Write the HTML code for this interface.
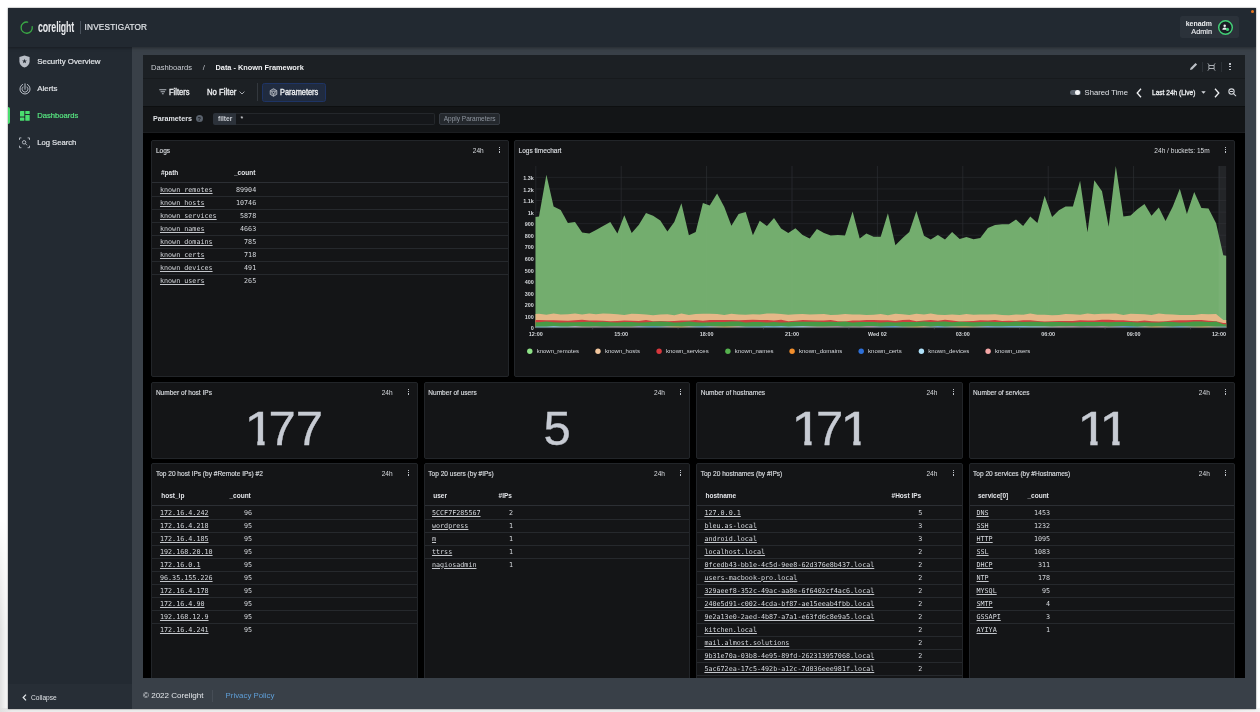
<!DOCTYPE html>
<html lang="en"><head><meta charset="utf-8"><title>Data - Known Framework | Corelight Investigator</title>
<style>
*{box-sizing:border-box;margin:0;padding:0}
html,body{width:1260px;height:712px;overflow:hidden;background:#fff}
body{font-family:"Liberation Sans",sans-serif;color:#d6d9de;position:relative}
.abs{position:absolute}
#outer{position:absolute;left:0;top:0;width:1260px;height:712px;background:#fff}
#outer:before{content:"";position:absolute;left:0;top:520px;width:9px;height:192px;background:linear-gradient(to right,rgba(0,0,0,.12),rgba(0,0,0,0));-webkit-mask-image:linear-gradient(to bottom,transparent,#000 110px);mask-image:linear-gradient(to bottom,transparent,#000 110px)}
#outer:after{content:"";position:absolute;left:0;top:708px;width:1260px;height:4px;background:linear-gradient(to right,#e0e0e0,#ececec 12px,#ececec 1225px,#f4f4f4)}
#frame{will-change:transform;position:absolute;left:8px;top:8px;width:1248px;height:701.3px;background:#394048;overflow:hidden;box-shadow:0 0 1.5px rgba(0,0,0,.6)}
#frame>*{position:absolute}
/* coordinates inside frame are page coords minus 8 */
#hdr{left:0;top:0;width:1248px;height:39px;background:#222931;box-shadow:0 1px 3px rgba(0,0,0,.35);z-index:3}
#side{left:0;top:39px;width:124px;height:663px;background:#232a32;z-index:2}
#side .foot{position:absolute;left:0;top:637px;width:124px;height:26px;background:#272e36}
.nav{position:absolute;left:29.3px;font-size:7.85px;color:#e3e6ea;-webkit-text-stroke:.18px;white-space:nowrap;line-height:10px;letter-spacing:0}
.nav.on{color:#58e882}
.ind{position:absolute;left:0;top:60px;width:2.2px;height:17px;background:#4ade6f;border-radius:0 2px 2px 0}
#main{left:135.2px;top:47.4px;width:1102.2px;height:622.7px;background:#000;overflow:hidden}
#main>*{position:absolute}
.row1{left:0;top:0;width:100%;height:22.5px;background:#1c2024}
.row2{left:0;top:22.5px;width:100%;height:28px;background:#1c2024;border-top:.7px solid #171a1d}
.row3{left:0;top:50.5px;width:100%;height:26.7px;background:#131517;border-top:.7px solid #0d0f10;border-bottom:.8px solid #1b1d20}
.t{position:absolute;white-space:nowrap;line-height:10px}
.panel{position:absolute;background:#141517;border:1px solid #222529;border-radius:2px;overflow:hidden}
.pt{position:absolute;left:3.5px;top:4.5px;-webkit-text-stroke:.15px;font-size:6.55px;line-height:10px;color:#d9dce0;white-space:nowrap}
.pr{position:absolute;right:24.5px;top:4.5px;font-size:6.55px;line-height:10px;color:#d9dce0;white-space:nowrap}
.dots{position:absolute;right:8.1px;top:5.7px;width:1.2px}
.dots i{display:block;width:1.2px;height:1.35px;background:#bfc3c9;margin-bottom:.95px}
.th{position:absolute;top:26.9px;font-size:6.5px;font-weight:700;line-height:10px;color:#e4e6ea;white-space:nowrap}
.hl{position:absolute;left:0;right:0;top:40.9px;height:1px;background:#2c2f34}
.tr{position:absolute;left:0;right:0;height:13px;font-family:"DejaVu Sans Mono","Liberation Mono",monospace;font-size:6.73px;line-height:12.4px;color:#d4d7dc}
.tr{border-top:.8px solid transparent}
.tr.sep{border-top-color:#26292d}
.tr span{position:absolute;top:0;white-space:nowrap}
.tr u{text-decoration-thickness:.75px;text-underline-offset:.7px;text-decoration-color:#c3c6cb}
.big{position:absolute;left:0;right:0;top:19.5px;text-align:center;font-size:49px;line-height:50px;color:#c7cbd3;-webkit-text-stroke:.35px #c7cbd3;white-space:nowrap}
.one{display:inline-block;width:21.8px;text-align:left;text-indent:-.8px;transform-origin:16.2px 50%;transform:scaleX(1.12);clip-path:polygon(-3px 0,17.5px 0,17.5px 60px,10.9px 60px,10.9px 37.9px,-3px 37.9px)}
.chart .ax{font-family:"Liberation Sans",sans-serif;font-size:5.45px;font-weight:700;fill:#d3d6da}
.chart .lg{font-family:"Liberation Sans",sans-serif;font-size:6px;fill:#d6d9de}
#foot{left:124px;top:670px;width:1124px;height:32px;background:#394048}

</style></head>
<body>
<div id="outer"></div>
<div id="frame">
  <div id="hdr">
    <svg class="abs" style="left:11px;top:11.5px" width="16" height="16" viewBox="0 0 16 16"><path d="M8.6 2.1 A5.6 5.6 0 1 0 13.2 6.6" fill="none" stroke="#3aa845" stroke-width="1.35" stroke-linecap="round"/></svg>
    <div class="t" id="lg1" style="left:29.6px;top:11.2px;font-size:14.2px;line-height:16px;font-weight:700;color:#e9ebee;transform-origin:0 50%;transform:scaleX(.622);letter-spacing:-.2px">corelight</div>
    <div class="abs" style="left:72px;top:13px;width:.8px;height:12.5px;background:#4a525c"></div>
    <div class="t" id="lg2" style="left:76.6px;top:15px;font-size:8.2px;line-height:10px;color:#dfe2e6;letter-spacing:.2px;-webkit-text-stroke:.2px">INVESTIGATOR</div>
    <div class="abs" style="left:1172px;top:7.700px;width:59.400px;height:22.800px;background:#2b323a;border-radius:2.500px"></div>
    <div class="t" style="right:44px;top:10.9px;font-size:6.95px;font-weight:700;color:#eef0f2;line-height:9px">kenadm</div>
    <div class="t" style="right:44px;top:18.6px;font-size:7.3px;color:#e8eaed;line-height:9px;-webkit-text-stroke:.15px">Admin</div>
    <svg class="abs" style="left:1209.2px;top:10.8px" width="17" height="17" viewBox="0 0 17 17"><circle cx="8.5" cy="8.5" r="6.8" fill="#191d24" stroke="#43d077" stroke-width="1.45"/><circle cx="7.7" cy="6.7" r="1.25" fill="#eceef0"/><path d="M5.4 10.700c0-1.600 1-2.300 2.300-2.300s2.300.700 2.300 2.300z" fill="#eceef0"/><circle cx="10.500" cy="10.400" r="1.600" fill="#43d077"/></svg>
    <div class="abs" style="left:1243px;top:1.6px;width:3px;height:3px;border-radius:50%;background:#e8761f"></div>
  </div>
  <div id="side">
    <!-- y inside side = page y - 47 -->
    <svg class="abs" style="left:11.2px;top:8.4px" width="11" height="13" viewBox="0 0 11 13"><path d="M5.5.4 10.6 2.1v4.3c0 3-2.2 5.2-5.1 6.2C2.6 11.600.4 9.400.4 6.400V2.100z" fill="#b9bec6"/><path d="M5.5 3.700 6.150 5.400 7.950 5.450 6.550 6.550 7.050 8.300 5.500 7.300 3.950 8.300 4.450 6.550 3.050 5.450 4.850 5.400z" fill="#232a32"/></svg>
    <div class="nav" style="top:9.6px">Security Overview</div>
    <svg class="abs" style="left:10.700px;top:35.700px" width="12" height="12" viewBox="0 0 12 12" fill="none" stroke="#b9bec6" stroke-linecap="round"><path d="M3.600 1.400A5.100 5.100 0 1 0 8.400 1.400" stroke-width="1"/><path d="M3.900 3.900A3 3 0 1 0 8.100 3.900" stroke-width=".9"/><path d="M6 .8V6.300" stroke-width="1"/></svg>
    <div class="nav" style="top:36.6px">Alerts</div>
    <div class="ind"></div>
    <svg class="abs" style="left:11.800px;top:64.200px" width="10" height="10" viewBox="0 0 10 10" fill="#4ade6f"><rect x="0" y="0" width="4.300" height="5.600" rx=".5"/><rect x="0" y="6.600" width="4.300" height="3.100" rx=".5"/><rect x="5.300" y="0" width="4.400" height="3.100" rx=".5"/><rect x="5.300" y="4.100" width="4.400" height="5.600" rx=".5"/></svg>
    <div class="nav on" style="top:63.800px;font-size:7.620px">Dashboards</div>
    <svg class="abs" style="left:11.300px;top:89.900px" width="11" height="12" viewBox="0 0 11 12" fill="none" stroke="#b9bec6" stroke-width=".9"><path d="M.5 2.900V.9h1.900M8.600.9h1.900v2M10.500 8.700v2H8.600M2.400 10.700H.5v-2"/><circle cx="5.100" cy="5.300" r="1.700"/><path d="M6.400 6.600 7.800 8" stroke-linecap="round"/></svg>
    <div class="nav" style="top:90.700px;font-size:7.620px">Log Search</div>
    <div class="foot"></div>
    <svg class="abs" style="left:13.500px;top:647.200px" width="5" height="7" viewBox="0 0 5 7" fill="none" stroke="#e3e6ea" stroke-width="1.25"><path d="M4 .6 1.200 3.500 4 6.400"/></svg>
    <div class="t" style="left:23.100px;top:645.700px;font-size:6.600px;color:#dde0e4">Collapse</div>
  </div>
  <div id="main">
    <!-- coords inside main = page minus (143.2, 55.3) -->
    <div class="row1"></div><div class="row2"></div><div class="row3"></div>
    <div class="t" style="left:7.800px;top:7.400px;font-size:7.600px;color:#c9cdd3">Dashboards</div>
    <div class="t" style="left:59.500px;top:7.400px;font-size:7.600px;color:#c9cdd3">/</div>
    <div class="t" style="left:72.300px;top:7.400px;font-size:7.370px;font-weight:700;color:#f1f2f4">Data - Known Framework</div>
    <!-- top-right icons -->
    <svg class="abs" style="left:1045.600px;top:6.900px" width="9" height="9" viewBox="0 0 9 9"><path d="M6.500.9 8.100 2.500 3.100 7.500 1 8 1.500 5.900z" fill="#bcc0c6"/></svg>
    <div class="abs" style="left:1059.100px;top:6.500px;width:.7px;height:10px;background:#2c3136"></div>
    <svg class="abs" style="left:1063.900px;top:7.400px" width="9" height="8" viewBox="0 0 9 8" fill="none" stroke="#b4b8be" stroke-width=".95"><path d="M.9.400Q1.900 1.500 1.900 2.500V5.500Q1.900 6.500.9 7.600M8.100.400Q7.100 1.500 7.100 2.500V5.500Q7.100 6.500 8.100 7.600M1.900 2.500H7.100M1.900 5.500H7.100"/></svg>
    <div class="abs" style="left:1077.600px;top:6.500px;width:.7px;height:10px;background:#2c3136"></div>
    <div class="dots" style="left:1086.300px;top:7.800px;right:auto"><i style="margin-bottom:1.400px"></i><i style="margin-bottom:1.400px"></i><i></i></div>
    <!-- filters row -->
    <svg class="abs" style="left:15.900px;top:33.300px" width="8" height="6" viewBox="0 0 8 6" stroke="#b4b9c0" stroke-width="1.050"><path d="M.3.700h7M1.600 2.700h4.400M2.900 4.700h1.800"/></svg>
    <div class="t" style="left:26px;top:32.500px;font-size:8.200px;color:#eceef0;-webkit-text-stroke:.32px;transform-origin:0 50%;transform:scaleX(.923)">Filters</div>
    <div class="t" style="left:63.400px;top:32.500px;font-size:8.200px;color:#f0f2f4;-webkit-text-stroke:.32px;transform-origin:0 50%;transform:scaleX(.946)">No Filter</div>
    <svg class="abs" style="left:96.200px;top:35.500px" width="6" height="4" viewBox="0 0 6 4" fill="none" stroke="#c9cdd3" stroke-width=".8"><path d="M.6.600 3 3 5.400.6"/></svg>
    <div class="abs" style="left:113.500px;top:27.500px;width:.6px;height:18px;background:#33383e"></div>
    <div class="abs" style="left:118.800px;top:27.300px;width:63.600px;height:19.400px;background:#202b3f;border:.9px solid #1e3465;border-radius:2.500px"></div>
    <svg class="abs" style="left:125.800px;top:32.300px" width="9" height="9" viewBox="0 0 9 9" fill="none" stroke="#c3c7cf" stroke-width=".75"><path d="M4.500.700 7.800 2.600V6.400L4.500 8.300 1.200 6.400V2.600z" fill="#8f95a0" fill-opacity=".55"/><path d="M4.500 4.500V8.300M4.500 4.500 1.200 2.600M4.500 4.500 7.800 2.600" stroke-width=".6"/><circle cx="4.500" cy="4.500" r="1.100" fill="#202b3f" stroke-width=".6"/></svg>
    <div class="t" style="left:137px;top:32.500px;font-size:8.200px;color:#f0f2f4;-webkit-text-stroke:.32px;transform-origin:0 50%;transform:scaleX(.905)">Parameters</div>
    <!-- shared time -->
    <div class="abs" style="left:926.600px;top:34.200px;width:10.800px;height:5.800px;border-radius:3px;background:#59616b"></div>
    <div class="abs" style="left:931.800px;top:34.400px;width:5.400px;height:5.400px;border-radius:50%;background:#f2f3f5"></div>
    <div class="t" style="left:941.400px;top:32.300px;font-size:7.650px;color:#dfe2e6">Shared Time</div>
    <svg class="abs" style="left:992.400px;top:32.600px" width="6" height="10" viewBox="0 0 6 10" fill="none" stroke="#eef0f2" stroke-width="1.300"><path d="M5 .8 1.200 5 5 9.200"/></svg>
    <div class="t" style="left:1008.500px;top:32.300px;font-size:7.400px;color:#eceef0;-webkit-text-stroke:.3px;transform-origin:0 50%;transform:scaleX(.888)">Last 24h (Live)</div>
    <svg class="abs" style="left:1057.700px;top:35.300px" width="5" height="3" viewBox="0 0 5 3"><path d="M.3.300h4.400L2.500 2.800z" fill="#d6d9de"/></svg>
    <svg class="abs" style="left:1071px;top:32.600px" width="6" height="10" viewBox="0 0 6 10" fill="none" stroke="#eef0f2" stroke-width="1.300"><path d="M1 .8 4.800 5 1 9.200"/></svg>
    <svg class="abs" style="left:1085.100px;top:32.800px" width="8.500" height="8.500" viewBox="0 0 8 8" fill="none" stroke="#d3d6db" stroke-width="1"><circle cx="3.300" cy="3.300" r="2.500"/><path d="M5.200 5.200 7.300 7.300M2.200 3.300h2.200" stroke-linecap="round"/></svg>
    <!-- params row -->
    <div class="t" style="left:9.800px;top:58.600px;font-size:7.150px;font-weight:700;color:#dfe2e6">Parameters</div>
    <div class="abs" style="left:52.500px;top:59.800px;width:7px;height:7px;border-radius:50%;background:#5a626d"></div>
    <div class="t" style="left:54.400px;top:58.400px;font-size:5.600px;font-weight:700;color:#14171a">?</div>
    <div class="abs" style="left:92.500px;top:57.200px;width:199.500px;height:12.200px;background:#15171a;border:.6px solid #24272b;border-left:0;border-radius:0 2px 2px 0"></div>
    <div class="abs" style="left:69.800px;top:57.300px;width:23px;height:12px;background:#2c323a;border-radius:2px 0 0 2px"></div>
    <div class="t" style="left:74.800px;top:58.400px;font-size:6.600px;font-weight:700;color:#c9cdd3">filter</div>
    <div class="t" style="left:97.300px;top:58.400px;font-size:7px;color:#e6e8eb">*</div>
    <div class="abs" style="left:295.800px;top:57.400px;width:61px;height:12px;background:#24282d;border:.6px solid #353a41;border-radius:2px"></div>
    <div class="t" style="left:300.500px;top:58.500px;font-size:6.540px;color:#8f96a0">Apply Parameters</div>
    <div id="dash" class="abs" style="left:-143.200px;top:-55.400px;width:1260px;height:712px">
<div class="panel" style="left:151.4px;top:140.0px;width:357.8px;height:237.0px;"><div class="pt">Logs</div><div class="pr">24h</div><div class="dots"><i></i><i></i><i></i></div><div class="th" style="left:8.6px">#path</div><div class="th r" style="right:252.9px">_count</div><div class="hl"></div><div class="tr" style="top:41.60px"><span class="c1" style="left:7.6px"><u>known_remotes</u></span><span class="c2" style="right:252.0px">89904</span></div><div class="tr sep" style="top:54.60px"><span class="c1" style="left:7.6px"><u>known_hosts</u></span><span class="c2" style="right:252.0px">10746</span></div><div class="tr sep" style="top:67.60px"><span class="c1" style="left:7.6px"><u>known_services</u></span><span class="c2" style="right:252.0px">5878</span></div><div class="tr sep" style="top:80.60px"><span class="c1" style="left:7.6px"><u>known_names</u></span><span class="c2" style="right:252.0px">4663</span></div><div class="tr sep" style="top:93.60px"><span class="c1" style="left:7.6px"><u>known_domains</u></span><span class="c2" style="right:252.0px">785</span></div><div class="tr sep" style="top:106.60px"><span class="c1" style="left:7.6px"><u>known_certs</u></span><span class="c2" style="right:252.0px">718</span></div><div class="tr sep" style="top:119.60px"><span class="c1" style="left:7.6px"><u>known_devices</u></span><span class="c2" style="right:252.0px">491</span></div><div class="tr sep" style="top:132.60px"><span class="c1" style="left:7.6px"><u>known_users</u></span><span class="c2" style="right:252.0px">265</span></div></div>
<div class="panel" style="left:514.0px;top:140.0px;width:721.2px;height:237.0px;"><div class="pt">Logs timechart</div><div class="pr">24h / buckets: 15m</div><div class="dots"><i></i><i></i><i></i></div><svg class="chart" width="722" height="238" viewBox="0 0 722 238" style="position:absolute;left:-1.0px;top:-1px"><rect x="704.6" y="26.0" width="7.6" height="161.8" fill="#1a1c1f"/>
<line x1="21.5" x2="712.2" y1="187.80" y2="187.80" stroke="#26282c" stroke-width="0.7"/>
<line x1="21.5" x2="712.2" y1="176.23" y2="176.23" stroke="#26282c" stroke-width="0.7"/>
<line x1="21.5" x2="712.2" y1="164.66" y2="164.66" stroke="#26282c" stroke-width="0.7"/>
<line x1="21.5" x2="712.2" y1="153.09" y2="153.09" stroke="#26282c" stroke-width="0.7"/>
<line x1="21.5" x2="712.2" y1="141.52" y2="141.52" stroke="#26282c" stroke-width="0.7"/>
<line x1="21.5" x2="712.2" y1="129.95" y2="129.95" stroke="#26282c" stroke-width="0.7"/>
<line x1="21.5" x2="712.2" y1="118.38" y2="118.38" stroke="#26282c" stroke-width="0.7"/>
<line x1="21.5" x2="712.2" y1="106.81" y2="106.81" stroke="#26282c" stroke-width="0.7"/>
<line x1="21.5" x2="712.2" y1="95.24" y2="95.24" stroke="#26282c" stroke-width="0.7"/>
<line x1="21.5" x2="712.2" y1="83.67" y2="83.67" stroke="#26282c" stroke-width="0.7"/>
<line x1="21.5" x2="712.2" y1="72.10" y2="72.10" stroke="#26282c" stroke-width="0.7"/>
<line x1="21.5" x2="712.2" y1="60.53" y2="60.53" stroke="#26282c" stroke-width="0.7"/>
<line x1="21.5" x2="712.2" y1="48.96" y2="48.96" stroke="#26282c" stroke-width="0.7"/>
<line x1="21.5" x2="712.2" y1="37.39" y2="37.39" stroke="#26282c" stroke-width="0.7"/>
<line x1="21.8" x2="21.8" y1="26.0" y2="187.8" stroke="#2a2c30" stroke-width="0.7"/>
<line x1="107.2" x2="107.2" y1="26.0" y2="187.8" stroke="#2a2c30" stroke-width="0.7"/>
<line x1="192.6" x2="192.6" y1="26.0" y2="187.8" stroke="#2a2c30" stroke-width="0.7"/>
<line x1="278.0" x2="278.0" y1="26.0" y2="187.8" stroke="#2a2c30" stroke-width="0.7"/>
<line x1="363.4" x2="363.4" y1="26.0" y2="187.8" stroke="#2a2c30" stroke-width="0.7"/>
<line x1="448.8" x2="448.8" y1="26.0" y2="187.8" stroke="#2a2c30" stroke-width="0.7"/>
<line x1="534.2" x2="534.2" y1="26.0" y2="187.8" stroke="#2a2c30" stroke-width="0.7"/>
<line x1="619.6" x2="619.6" y1="26.0" y2="187.8" stroke="#2a2c30" stroke-width="0.7"/>
<line x1="705.0" x2="705.0" y1="26.0" y2="187.8" stroke="#2a2c30" stroke-width="0.7"/>
<path d="M21.5,187.8 L21.5,77.1 L25.0,76.4 L32.4,34.7 L39.6,66.4 L46.7,70.0 L53.9,82.9 L61.0,81.9 L68.1,92.4 L75.3,93.6 L82.0,90.0 L89.1,86.1 L96.3,81.9 L103.4,93.6 L110.3,75.3 L117.7,92.9 L124.9,84.7 L132.0,72.9 L139.1,75.7 L146.3,80.4 L153.4,91.4 L160.3,82.1 L167.4,63.3 L174.9,95.3 L181.7,92.1 L188.9,62.9 L195.7,65.4 L203.1,53.6 L210.3,67.1 L217.4,85.7 L224.6,74.0 L231.7,71.9 L238.9,95.3 L245.7,80.7 L252.9,86.1 L260.0,77.9 L267.1,88.6 L274.3,92.9 L281.4,88.3 L288.6,95.0 L295.7,98.6 L302.9,89.0 L310.0,92.9 L316.7,95.4 L323.9,95.0 L331.0,95.4 L338.6,71.4 L345.7,98.6 L352.4,93.6 L359.6,96.7 L366.7,96.7 L373.9,73.3 L381.4,105.3 L388.6,97.9 L395.3,92.1 L402.4,71.0 L410.0,95.7 L416.7,99.6 L423.9,95.0 L431.0,99.6 L438.1,92.1 L445.7,99.0 L452.4,96.9 L459.6,99.3 L466.3,98.1 L473.9,87.9 L481.0,85.0 L488.1,84.3 L494.9,84.3 L502.0,79.6 L509.1,86.0 L516.3,76.4 L523.4,83.1 L530.6,55.7 L538.1,77.1 L544.9,70.3 L551.6,66.4 L558.9,66.4 L566.1,40.8 L573.5,92.2 L580.3,40.3 L588.0,51.3 L594.7,86.7 L601.8,26.0 L609.4,76.6 L616.6,75.4 L623.4,69.3 L630.5,63.9 L637.5,75.7 L644.8,67.6 L651.5,81.1 L658.8,66.4 L665.8,48.8 L672.9,74.0 L680.2,52.1 L687.4,68.1 L694.5,68.6 L702.1,83.3 L709.3,115.3 L712.2,115.8 L712.2,187.8 Z" fill="#73ad6e" />
<rect x="704.6" y="26.0" width="7.6" height="161.8" fill="#ffffff" opacity="0.045"/>
<path d="M21.5,187.8 L21.5,174.1 L25.0,173.8 L32.4,174.7 L39.6,173.6 L46.7,174.5 L53.9,174.2 L61.0,173.6 L68.1,174.4 L75.3,173.6 L82.0,174.3 L89.1,173.6 L96.3,173.7 L103.4,174.3 L110.3,175.0 L117.7,173.7 L124.9,173.9 L132.0,174.6 L139.1,175.2 L146.3,174.5 L153.4,174.2 L160.3,175.3 L167.4,173.6 L174.9,175.0 L181.7,174.0 L188.9,173.8 L195.7,173.7 L203.1,174.1 L210.3,175.0 L217.4,173.8 L224.6,174.5 L231.7,174.7 L238.9,174.2 L245.7,174.5 L252.9,173.6 L260.0,173.6 L267.1,173.9 L274.3,174.7 L281.4,174.3 L288.6,174.1 L295.7,174.6 L302.9,174.3 L310.0,174.0 L316.7,174.9 L323.9,174.8 L331.0,173.9 L338.6,174.5 L345.7,174.4 L352.4,175.1 L359.6,174.8 L366.7,174.0 L373.9,175.3 L381.4,173.7 L388.6,174.3 L395.3,174.9 L402.4,173.8 L410.0,174.4 L416.7,173.6 L423.9,174.7 L431.0,174.9 L438.1,174.5 L445.7,175.1 L452.4,174.1 L459.6,174.8 L466.3,174.6 L473.9,174.5 L481.0,174.3 L488.1,175.0 L494.9,175.2 L502.0,174.4 L509.1,174.7 L516.3,173.6 L523.4,174.8 L530.6,174.7 L538.1,175.3 L544.9,175.0 L551.6,174.0 L558.9,174.2 L566.1,174.7 L573.5,173.5 L580.3,174.3 L588.0,173.8 L594.7,173.7 L601.8,173.6 L609.4,174.9 L616.6,173.7 L623.4,173.9 L630.5,174.2 L637.5,175.1 L644.8,173.6 L651.5,174.3 L658.8,174.5 L665.8,175.1 L672.9,175.0 L680.2,175.1 L687.4,174.0 L694.5,174.2 L702.1,174.1 L709.3,180.0 L712.2,180.0 L712.2,187.8 Z" fill="#e5b888" />
<path d="M21.5,187.8 L21.5,180.0 L25.0,180.1 L32.4,180.2 L39.6,180.2 L46.7,180.6 L53.9,180.7 L61.0,180.2 L68.1,179.8 L75.3,180.5 L82.0,180.4 L89.1,180.7 L96.3,181.3 L103.4,180.9 L110.3,180.6 L117.7,180.8 L124.9,180.9 L132.0,179.9 L139.1,181.2 L146.3,181.0 L153.4,181.2 L160.3,181.1 L167.4,180.4 L174.9,180.4 L181.7,180.0 L188.9,180.8 L195.7,179.9 L203.1,179.9 L210.3,180.1 L217.4,180.1 L224.6,180.3 L231.7,179.9 L238.9,179.8 L245.7,180.0 L252.9,180.0 L260.0,180.4 L267.1,179.8 L274.3,181.2 L281.4,180.8 L288.6,180.0 L295.7,180.2 L302.9,180.4 L310.0,180.4 L316.7,180.0 L323.9,181.2 L331.0,181.4 L338.6,180.5 L345.7,180.6 L352.4,179.9 L359.6,180.0 L366.7,180.3 L373.9,180.2 L381.4,181.1 L388.6,180.1 L395.3,179.8 L402.4,181.3 L410.0,180.6 L416.7,180.0 L423.9,180.7 L431.0,179.8 L438.1,180.6 L445.7,181.4 L452.4,181.2 L459.6,180.9 L466.3,180.2 L473.9,180.4 L481.0,180.1 L488.1,181.0 L494.9,180.7 L502.0,181.0 L509.1,180.3 L516.3,180.2 L523.4,181.1 L530.6,181.4 L538.1,181.2 L544.9,181.1 L551.6,181.1 L558.9,181.0 L566.1,180.2 L573.5,180.6 L580.3,180.4 L588.0,179.8 L594.7,179.8 L601.8,180.2 L609.4,180.2 L616.6,180.9 L623.4,181.3 L630.5,180.5 L637.5,181.3 L644.8,181.4 L651.5,181.3 L658.8,180.4 L665.8,180.2 L672.9,180.2 L680.2,180.1 L687.4,180.1 L694.5,180.8 L702.1,181.2 L709.3,183.0 L712.2,183.0 L712.2,187.8 Z" fill="#cd403e" />
<path d="M21.5,187.8 L21.5,182.2 L25.0,182.3 L32.4,181.6 L39.6,182.2 L46.7,182.4 L53.9,182.3 L61.0,182.3 L68.1,182.0 L75.3,181.7 L82.0,182.3 L89.1,181.8 L96.3,182.3 L103.4,182.5 L110.3,181.9 L117.7,181.9 L124.9,182.4 L132.0,182.2 L139.1,181.7 L146.3,181.6 L153.4,181.7 L160.3,182.4 L167.4,182.3 L174.9,181.6 L181.7,182.3 L188.9,182.5 L195.7,182.2 L203.1,181.9 L210.3,182.0 L217.4,181.6 L224.6,181.5 L231.7,182.5 L238.9,182.1 L245.7,182.0 L252.9,182.4 L260.0,181.9 L267.1,182.4 L274.3,182.3 L281.4,181.7 L288.6,181.8 L295.7,181.8 L302.9,181.7 L310.0,182.1 L316.7,181.8 L323.9,181.9 L331.0,181.6 L338.6,182.4 L345.7,181.9 L352.4,182.0 L359.6,182.1 L366.7,182.4 L373.9,181.9 L381.4,182.4 L388.6,182.0 L395.3,182.0 L402.4,182.0 L410.0,181.5 L416.7,181.9 L423.9,181.7 L431.0,181.5 L438.1,182.3 L445.7,181.7 L452.4,182.0 L459.6,182.2 L466.3,182.1 L473.9,181.8 L481.0,182.0 L488.1,182.1 L494.9,182.3 L502.0,181.6 L509.1,182.1 L516.3,181.7 L523.4,181.8 L530.6,182.3 L538.1,182.0 L544.9,182.1 L551.6,182.3 L558.9,182.4 L566.1,181.9 L573.5,182.1 L580.3,182.0 L588.0,182.0 L594.7,182.2 L601.8,182.0 L609.4,182.0 L616.6,182.0 L623.4,182.4 L630.5,182.2 L637.5,182.4 L644.8,182.4 L651.5,181.8 L658.8,182.1 L665.8,182.4 L672.9,182.3 L680.2,181.6 L687.4,181.6 L694.5,181.9 L702.1,181.6 L709.3,184.2 L712.2,184.2 L712.2,187.8 Z" fill="#479a46" />
<defs><linearGradient id="mix" x1="0" x2="1" y1="0" y2="0"><stop offset="0.000" stop-color="#6fa8c8"/><stop offset="0.034" stop-color="#8fb5cf"/><stop offset="0.069" stop-color="#b39aa8"/><stop offset="0.103" stop-color="#8d8590"/><stop offset="0.138" stop-color="#a58fa0"/><stop offset="0.172" stop-color="#5f95c9"/><stop offset="0.207" stop-color="#c9a06a"/><stop offset="0.241" stop-color="#6c9ccc"/><stop offset="0.276" stop-color="#d0a070"/><stop offset="0.310" stop-color="#7d9fc4"/><stop offset="0.345" stop-color="#6fa8c8"/><stop offset="0.379" stop-color="#8fb5cf"/><stop offset="0.414" stop-color="#b39aa8"/><stop offset="0.448" stop-color="#8d8590"/><stop offset="0.483" stop-color="#a58fa0"/><stop offset="0.517" stop-color="#5f95c9"/><stop offset="0.552" stop-color="#c9a06a"/><stop offset="0.586" stop-color="#6c9ccc"/><stop offset="0.621" stop-color="#d0a070"/><stop offset="0.655" stop-color="#7d9fc4"/><stop offset="0.690" stop-color="#6fa8c8"/><stop offset="0.724" stop-color="#8fb5cf"/><stop offset="0.759" stop-color="#b39aa8"/><stop offset="0.793" stop-color="#8d8590"/><stop offset="0.828" stop-color="#a58fa0"/><stop offset="0.862" stop-color="#5f95c9"/><stop offset="0.897" stop-color="#c9a06a"/><stop offset="0.931" stop-color="#6c9ccc"/><stop offset="0.966" stop-color="#d0a070"/><stop offset="1.000" stop-color="#7d9fc4"/></linearGradient></defs>
<path d="M21.5,187.8 L21.5,186.4 L25.0,186.4 L32.4,186.5 L39.6,186.1 L46.7,186.4 L53.9,186.4 L61.0,186.1 L68.1,186.5 L75.3,186.5 L82.0,186.2 L89.1,186.5 L96.3,186.2 L103.4,186.3 L110.3,186.5 L117.7,186.5 L124.9,186.1 L132.0,186.3 L139.1,186.3 L146.3,186.2 L153.4,186.1 L160.3,186.2 L167.4,186.4 L174.9,186.1 L181.7,186.3 L188.9,186.3 L195.7,186.1 L203.1,186.2 L210.3,186.4 L217.4,186.3 L224.6,186.1 L231.7,186.5 L238.9,186.4 L245.7,186.5 L252.9,186.1 L260.0,186.2 L267.1,186.1 L274.3,186.4 L281.4,186.2 L288.6,186.1 L295.7,186.3 L302.9,186.5 L310.0,186.5 L316.7,186.2 L323.9,186.1 L331.0,186.5 L338.6,186.3 L345.7,186.4 L352.4,186.1 L359.6,186.1 L366.7,186.4 L373.9,186.3 L381.4,186.1 L388.6,186.5 L395.3,186.4 L402.4,186.5 L410.0,186.1 L416.7,186.5 L423.9,186.1 L431.0,186.5 L438.1,186.3 L445.7,186.2 L452.4,186.3 L459.6,186.5 L466.3,186.2 L473.9,186.1 L481.0,186.3 L488.1,186.2 L494.9,186.1 L502.0,186.1 L509.1,186.1 L516.3,186.2 L523.4,186.2 L530.6,186.2 L538.1,186.4 L544.9,186.2 L551.6,186.3 L558.9,186.1 L566.1,186.2 L573.5,186.1 L580.3,186.2 L588.0,186.1 L594.7,186.4 L601.8,186.3 L609.4,186.1 L616.6,186.3 L623.4,186.5 L630.5,186.1 L637.5,186.5 L644.8,186.3 L651.5,186.3 L658.8,186.5 L665.8,186.2 L672.9,186.3 L680.2,186.4 L687.4,186.5 L694.5,186.2 L702.1,186.5 L709.3,186.6 L712.2,186.6 L712.2,187.8 Z" fill="url(#mix)" />
<line x1="107.2" x2="107.2" y1="26.0" y2="187.8" stroke="#ffffff" stroke-opacity="0.025" stroke-width="0.7"/>
<line x1="192.6" x2="192.6" y1="26.0" y2="187.8" stroke="#ffffff" stroke-opacity="0.025" stroke-width="0.7"/>
<line x1="278.0" x2="278.0" y1="26.0" y2="187.8" stroke="#ffffff" stroke-opacity="0.025" stroke-width="0.7"/>
<line x1="363.4" x2="363.4" y1="26.0" y2="187.8" stroke="#ffffff" stroke-opacity="0.025" stroke-width="0.7"/>
<line x1="448.8" x2="448.8" y1="26.0" y2="187.8" stroke="#ffffff" stroke-opacity="0.025" stroke-width="0.7"/>
<line x1="534.2" x2="534.2" y1="26.0" y2="187.8" stroke="#ffffff" stroke-opacity="0.025" stroke-width="0.7"/>
<line x1="619.6" x2="619.6" y1="26.0" y2="187.8" stroke="#ffffff" stroke-opacity="0.025" stroke-width="0.7"/>
<line x1="21.5" x2="712.2" y1="187.8" y2="187.8" stroke="#3a3d42" stroke-width="0.6"/>
<text x="19.8" y="190.40" text-anchor="end" class="ax">0</text>
<text x="19.8" y="178.83" text-anchor="end" class="ax">100</text>
<text x="19.8" y="167.26" text-anchor="end" class="ax">200</text>
<text x="19.8" y="155.69" text-anchor="end" class="ax">300</text>
<text x="19.8" y="144.12" text-anchor="end" class="ax">400</text>
<text x="19.8" y="132.55" text-anchor="end" class="ax">500</text>
<text x="19.8" y="120.98" text-anchor="end" class="ax">600</text>
<text x="19.8" y="109.41" text-anchor="end" class="ax">700</text>
<text x="19.8" y="97.84" text-anchor="end" class="ax">800</text>
<text x="19.8" y="86.27" text-anchor="end" class="ax">900</text>
<text x="19.8" y="74.70" text-anchor="end" class="ax">1k</text>
<text x="19.8" y="63.13" text-anchor="end" class="ax">1.1k</text>
<text x="19.8" y="51.56" text-anchor="end" class="ax">1.2k</text>
<text x="19.8" y="39.99" text-anchor="end" class="ax">1.3k</text>
<text x="21.8" y="196.2" text-anchor="middle" class="ax">12:00</text>
<text x="107.2" y="196.2" text-anchor="middle" class="ax">15:00</text>
<text x="192.6" y="196.2" text-anchor="middle" class="ax">18:00</text>
<text x="278.0" y="196.2" text-anchor="middle" class="ax">21:00</text>
<text x="363.4" y="196.2" text-anchor="middle" class="ax">Wed 02</text>
<text x="448.8" y="196.2" text-anchor="middle" class="ax">03:00</text>
<text x="534.2" y="196.2" text-anchor="middle" class="ax">06:00</text>
<text x="619.6" y="196.2" text-anchor="middle" class="ax">09:00</text>
<text x="705.0" y="196.2" text-anchor="middle" class="ax">12:00</text>
<line x1="78.7" x2="78.7" y1="187.8" y2="189.3" stroke="#4a4d52" stroke-width="0.6"/>
<line x1="164.1" x2="164.1" y1="187.8" y2="189.3" stroke="#4a4d52" stroke-width="0.6"/>
<line x1="249.5" x2="249.5" y1="187.8" y2="189.3" stroke="#4a4d52" stroke-width="0.6"/>
<line x1="334.9" x2="334.9" y1="187.8" y2="189.3" stroke="#4a4d52" stroke-width="0.6"/>
<line x1="420.3" x2="420.3" y1="187.8" y2="189.3" stroke="#4a4d52" stroke-width="0.6"/>
<line x1="505.7" x2="505.7" y1="187.8" y2="189.3" stroke="#4a4d52" stroke-width="0.6"/>
<line x1="591.1" x2="591.1" y1="187.8" y2="189.3" stroke="#4a4d52" stroke-width="0.6"/>
<line x1="676.5" x2="676.5" y1="187.8" y2="189.3" stroke="#4a4d52" stroke-width="0.6"/>
<circle cx="15.8" cy="211.3" r="2.7" fill="#8ee287"/>
<text x="22.7" y="213.4" class="lg">known_remotes</text>
<circle cx="84.0" cy="211.3" r="2.7" fill="#f1c59d"/>
<text x="90.9" y="213.4" class="lg">known_hosts</text>
<circle cx="145.1" cy="211.3" r="2.7" fill="#d7373d"/>
<text x="152.0" y="213.4" class="lg">known_services</text>
<circle cx="213.9" cy="211.3" r="2.7" fill="#55b14e"/>
<text x="220.8" y="213.4" class="lg">known_names</text>
<circle cx="278.1" cy="211.3" r="2.7" fill="#f28e2c"/>
<text x="285.0" y="213.4" class="lg">known_domains</text>
<circle cx="347.2" cy="211.3" r="2.7" fill="#2d6fd8"/>
<text x="354.1" y="213.4" class="lg">known_certs</text>
<circle cx="407.4" cy="211.3" r="2.7" fill="#b0e1f9"/>
<text x="414.3" y="213.4" class="lg">known_devices</text>
<circle cx="474.1" cy="211.3" r="2.7" fill="#f4a6a6"/>
<text x="481.0" y="213.4" class="lg">known_users</text></svg></div>
<div class="panel" style="left:151.4px;top:382.0px;width:266.7px;height:76.6px;"><div class="pt">Number of host IPs</div><div class="pr">24h</div><div class="dots"><i></i><i></i><i></i></div><div class="big"><span class="one">1</span>77</div></div>
<div class="panel" style="left:423.8px;top:382.0px;width:266.7px;height:76.6px;"><div class="pt">Number of users</div><div class="pr">24h</div><div class="dots"><i></i><i></i><i></i></div><div class="big">5</div></div>
<div class="panel" style="left:696.2px;top:382.0px;width:266.7px;height:76.6px;"><div class="pt">Number of hostnames</div><div class="pr">24h</div><div class="dots"><i></i><i></i><i></i></div><div class="big"><span class="one">1</span>7<span class="one">1</span></div></div>
<div class="panel" style="left:968.6px;top:382.0px;width:266.7px;height:76.6px;"><div class="pt">Number of services</div><div class="pr">24h</div><div class="dots"><i></i><i></i><i></i></div><div class="big"><span class="one">1</span><span class="one">1</span></div></div>
<div class="panel" style="left:151.4px;top:463.0px;width:266.7px;height:230.0px;"><div class="pt">Top 20 host IPs (by #Remote IPs) #2</div><div class="pr">24h</div><div class="dots"><i></i><i></i><i></i></div><div class="th" style="left:8.9px">host_ip</div><div class="th r" style="right:166.3px">_count</div><div class="hl"></div><div class="tr" style="top:41.60px"><span class="c1" style="left:7.6px"><u>172.16.4.242</u></span><span class="c2" style="right:165.0px">96</span></div><div class="tr sep" style="top:54.60px"><span class="c1" style="left:7.6px"><u>172.16.4.218</u></span><span class="c2" style="right:165.0px">95</span></div><div class="tr sep" style="top:67.60px"><span class="c1" style="left:7.6px"><u>172.16.4.185</u></span><span class="c2" style="right:165.0px">95</span></div><div class="tr sep" style="top:80.60px"><span class="c1" style="left:7.6px"><u>192.168.20.10</u></span><span class="c2" style="right:165.0px">95</span></div><div class="tr sep" style="top:93.60px"><span class="c1" style="left:7.6px"><u>172.16.0.1</u></span><span class="c2" style="right:165.0px">95</span></div><div class="tr sep" style="top:106.60px"><span class="c1" style="left:7.6px"><u>96.35.155.226</u></span><span class="c2" style="right:165.0px">95</span></div><div class="tr sep" style="top:119.60px"><span class="c1" style="left:7.6px"><u>172.16.4.178</u></span><span class="c2" style="right:165.0px">95</span></div><div class="tr sep" style="top:132.60px"><span class="c1" style="left:7.6px"><u>172.16.4.90</u></span><span class="c2" style="right:165.0px">95</span></div><div class="tr sep" style="top:145.60px"><span class="c1" style="left:7.6px"><u>192.168.12.9</u></span><span class="c2" style="right:165.0px">95</span></div><div class="tr sep" style="top:158.60px"><span class="c1" style="left:7.6px"><u>172.16.4.241</u></span><span class="c2" style="right:165.0px">95</span></div></div>
<div class="panel" style="left:423.8px;top:463.0px;width:266.7px;height:230.0px;"><div class="pt">Top 20 users (by #IPs)</div><div class="pr">24h</div><div class="dots"><i></i><i></i><i></i></div><div class="th" style="left:8.4px">user</div><div class="th r" style="right:177.5px">#IPs</div><div class="hl"></div><div class="tr" style="top:41.60px"><span class="c1" style="left:7.2px"><u>5CCF7F285567</u></span><span class="c2" style="right:176.5px">2</span></div><div class="tr sep" style="top:54.60px"><span class="c1" style="left:7.2px"><u>wordpress</u></span><span class="c2" style="right:176.5px">1</span></div><div class="tr sep" style="top:67.60px"><span class="c1" style="left:7.2px"><u>m</u></span><span class="c2" style="right:176.5px">1</span></div><div class="tr sep" style="top:80.60px"><span class="c1" style="left:7.2px"><u>ttrss</u></span><span class="c2" style="right:176.5px">1</span></div><div class="tr sep" style="top:93.60px"><span class="c1" style="left:7.2px"><u>nagiosadmin</u></span><span class="c2" style="right:176.5px">1</span></div></div>
<div class="panel" style="left:696.2px;top:463.0px;width:266.7px;height:230.0px;"><div class="pt">Top 20 hostnames (by #IPs)</div><div class="pr">24h</div><div class="dots"><i></i><i></i><i></i></div><div class="th" style="left:8.3px">hostname</div><div class="th r" style="right:40.7px">#Host IPs</div><div class="hl"></div><div class="tr" style="top:41.60px"><span class="c1" style="left:7.2px"><u>127.0.0.1</u></span><span class="c2" style="right:39.7px">5</span></div><div class="tr sep" style="top:54.60px"><span class="c1" style="left:7.2px"><u>bleu.as-local</u></span><span class="c2" style="right:39.7px">3</span></div><div class="tr sep" style="top:67.60px"><span class="c1" style="left:7.2px"><u>android.local</u></span><span class="c2" style="right:39.7px">3</span></div><div class="tr sep" style="top:80.60px"><span class="c1" style="left:7.2px"><u>localhost.local</u></span><span class="c2" style="right:39.7px">2</span></div><div class="tr sep" style="top:93.60px"><span class="c1" style="left:7.2px"><u>0fcedb43-bb1e-4c5d-9ee8-62d376e8b437.local</u></span><span class="c2" style="right:39.7px">2</span></div><div class="tr sep" style="top:106.60px"><span class="c1" style="left:7.2px"><u>users-macbook-pro.local</u></span><span class="c2" style="right:39.7px">2</span></div><div class="tr sep" style="top:119.60px"><span class="c1" style="left:7.2px"><u>329aeef8-352c-49ac-aa8e-6f6402cf4ac6.local</u></span><span class="c2" style="right:39.7px">2</span></div><div class="tr sep" style="top:132.60px"><span class="c1" style="left:7.2px"><u>240e5d91-c002-4cda-bf87-ae15eeab4fbb.local</u></span><span class="c2" style="right:39.7px">2</span></div><div class="tr sep" style="top:145.60px"><span class="c1" style="left:7.2px"><u>9e2a13e0-2aed-4b87-a7a1-e63fd6c8e9a5.local</u></span><span class="c2" style="right:39.7px">2</span></div><div class="tr sep" style="top:158.60px"><span class="c1" style="left:7.2px"><u>kitchen.local</u></span><span class="c2" style="right:39.7px">2</span></div><div class="tr sep" style="top:171.60px"><span class="c1" style="left:7.2px"><u>mail.almost.solutions</u></span><span class="c2" style="right:39.7px">2</span></div><div class="tr sep" style="top:184.60px"><span class="c1" style="left:7.2px"><u>9b31e70a-03b8-4e95-89fd-262313957068.local</u></span><span class="c2" style="right:39.7px">2</span></div><div class="tr sep" style="top:197.60px"><span class="c1" style="left:7.2px"><u>5ac672ea-17c5-492b-a12c-7d036eee981f.local</u></span><span class="c2" style="right:39.7px">2</span></div><div class="tr sep" style="top:210.60px"><span class="c1" style="left:7.2px"><u>4b4bf41a-6d4d-41bb-ac1b-90866692b57b.local</u></span><span class="c2" style="right:39.7px">2</span></div></div>
<div class="panel" style="left:968.6px;top:463.0px;width:266.7px;height:230.0px;"><div class="pt">Top 20 services (by #Hostnames)</div><div class="pr">24h</div><div class="dots"><i></i><i></i><i></i></div><div class="th" style="left:8.3px">service[0]</div><div class="th r" style="right:185.5px">_count</div><div class="hl"></div><div class="tr" style="top:41.60px"><span class="c1" style="left:6.9px"><u>DNS</u></span><span class="c2" style="right:184.2px">1453</span></div><div class="tr sep" style="top:54.60px"><span class="c1" style="left:6.9px"><u>SSH</u></span><span class="c2" style="right:184.2px">1232</span></div><div class="tr sep" style="top:67.60px"><span class="c1" style="left:6.9px"><u>HTTP</u></span><span class="c2" style="right:184.2px">1095</span></div><div class="tr sep" style="top:80.60px"><span class="c1" style="left:6.9px"><u>SSL</u></span><span class="c2" style="right:184.2px">1083</span></div><div class="tr sep" style="top:93.60px"><span class="c1" style="left:6.9px"><u>DHCP</u></span><span class="c2" style="right:184.2px">311</span></div><div class="tr sep" style="top:106.60px"><span class="c1" style="left:6.9px"><u>NTP</u></span><span class="c2" style="right:184.2px">178</span></div><div class="tr sep" style="top:119.60px"><span class="c1" style="left:6.9px"><u>MYSQL</u></span><span class="c2" style="right:184.2px">95</span></div><div class="tr sep" style="top:132.60px"><span class="c1" style="left:6.9px"><u>SMTP</u></span><span class="c2" style="right:184.2px">4</span></div><div class="tr sep" style="top:145.60px"><span class="c1" style="left:6.9px"><u>GSSAPI</u></span><span class="c2" style="right:184.2px">3</span></div><div class="tr sep" style="top:158.60px"><span class="c1" style="left:6.9px"><u>AYIYA</u></span><span class="c2" style="right:184.2px">1</span></div></div>
    </div>
  </div>
  <div id="foot">
    <div class="t" style="left:11px;top:13px;font-size:8.050px;color:#e3e6ea">© 2022 Corelight</div>
    <div class="abs" style="left:79.800px;top:11.500px;width:.7px;height:12px;background:#464d56"></div>
    <div class="t" style="left:93.600px;top:13px;font-size:7.850px;color:#5f9fd8">Privacy Policy</div>
  </div>
</div>

</body></html>
